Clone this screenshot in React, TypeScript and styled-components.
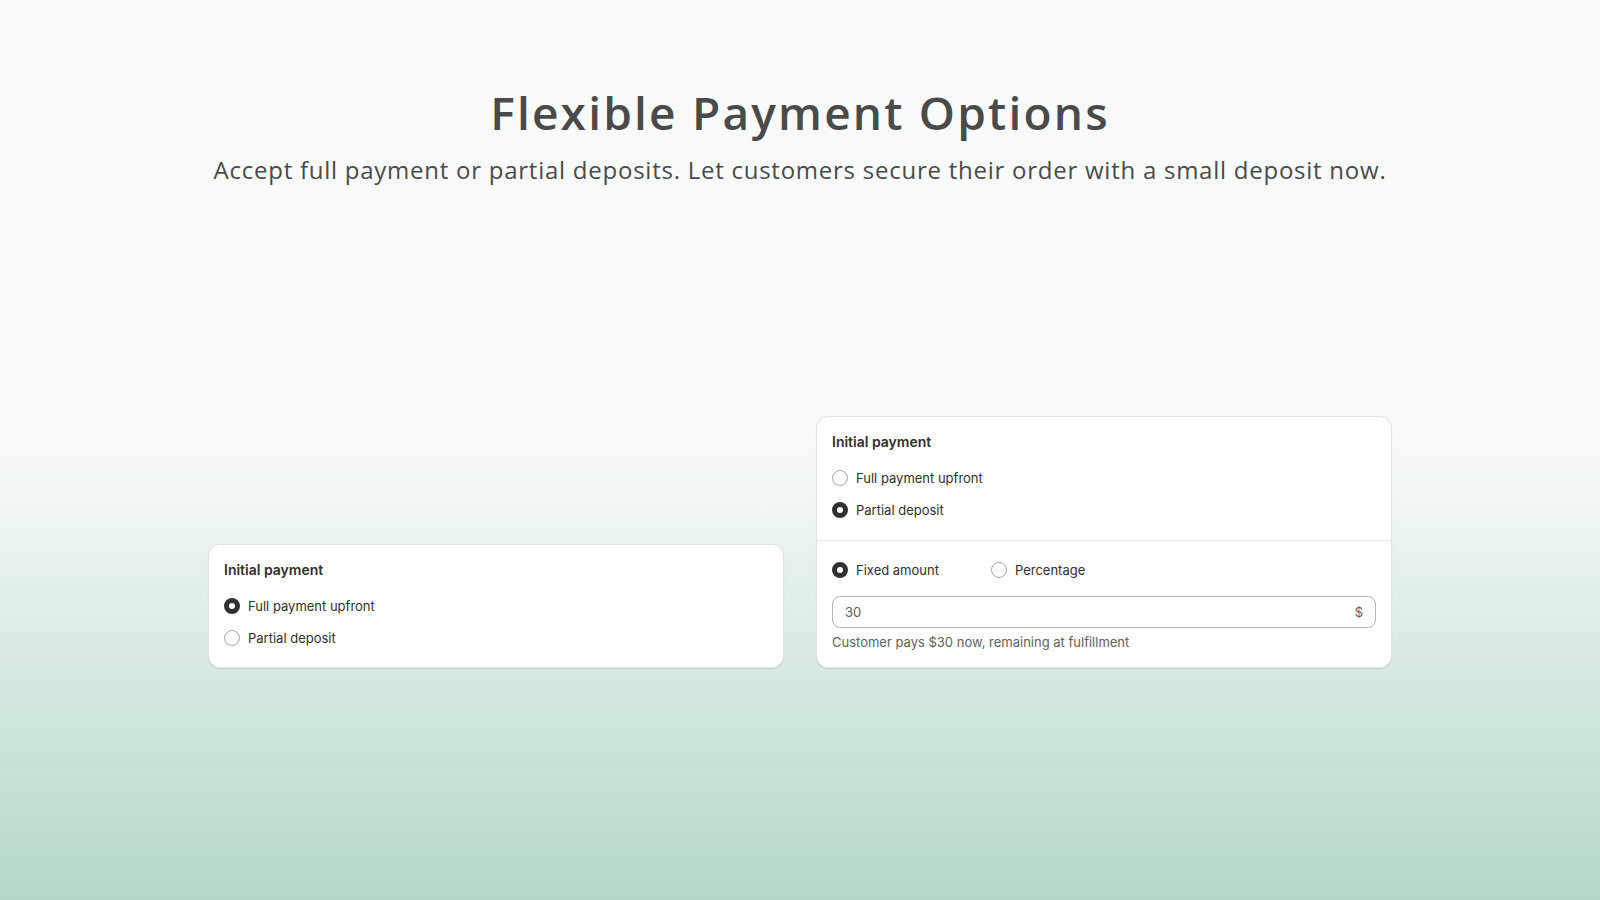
import React, { useState } from "react";
import styled, { createGlobalStyle, css } from "styled-components";

const GlobalStyle = createGlobalStyle`
  * {
    box-sizing: border-box;
  }
  body {
    margin: 0;
    font-family: Inter, "Liberation Sans", sans-serif;
    color: #303030;
  }
`;

const Page = styled.div`
  width: 100%;
  height: 900px;
  display: flex;
  flex-direction: column;
  align-items: center;
  background: linear-gradient(180deg, #f9fafa 0%, #f9fafa 49%, #eaf3ef 60%, #b3d9c6 100%);
`;

const Header = styled.header`
  display: flex;
  flex-direction: column;
  align-items: center;
  padding-top: 84px;
  gap: 14px;
`;

const Title = styled.h1`
  margin: 0;
  font-family: "Open Sans", "Noto Sans", sans-serif;
  font-size: 46px;
  font-weight: 600;
  line-height: 56px;
  letter-spacing: 2.2px;
  color: #4a4a4a;
`;

const Subtitle = styled.p`
  margin: 0;
  font-family: "Open Sans", "Noto Sans", sans-serif;
  font-size: 24px;
  font-weight: 400;
  line-height: 32px;
  letter-spacing: 0.75px;
  color: #4a4a4a;
`;

const Stage = styled.div`
  flex: 1;
  display: flex;
  align-items: flex-end;
  gap: 32px;
  padding-bottom: 232px;
`;

const Card = styled.div`
  width: 576px;
  background: #ffffff;
  border: 1px solid #e3e3e3;
  border-radius: 12px;
  box-shadow: 0 1px 1px rgba(26, 26, 26, 0.12);
  overflow: hidden;
`;

// $divided = lower section under a rule, $spaced = top section followed by one
const Section = styled.div<{ $divided?: boolean; $spaced?: boolean }>`
  display: flex;
  flex-direction: column;
  padding: 15px 15px ${(p) => (p.$spaced ? "18px" : "17px")} 15px;
  ${(p) =>
    p.$divided &&
    css`
      border-top: 1px solid #e8e8e8;
      padding-top: 17px;
    `}
`;

const Heading = styled.h3`
  margin: 0 0 14px;
  font-size: 14px;
  font-weight: 600;
  line-height: 20px;
  color: #303030;
`;

const Options = styled.div<{ $row?: boolean }>`
  display: flex;
  flex-direction: ${(p) => (p.$row ? "row" : "column")};
  gap: ${(p) => (p.$row ? "52px" : "8px")};
`;

const Option = styled.label`
  display: flex;
  align-items: center;
  gap: 8px;
  height: 24px;
  font-size: 13px;
  line-height: 20px;
  color: #303030;
  cursor: pointer;
`;

const Dot = styled.span<{ $on: boolean }>`
  width: 16px;
  height: 16px;
  border-radius: 50%;
  flex-shrink: 0;
  background: #ffffff;
  border: ${(p) => (p.$on ? "5px solid #303030" : "1px solid #a8a8a8")};
`;

const Field = styled.div`
  margin-top: 14px;
  height: 32px;
  display: flex;
  align-items: center;
  justify-content: space-between;
  padding: 0 12px;
  border: 1px solid #b5b5b5;
  border-radius: 8px;
  background: #fdfdfd;
  font-size: 13px;
  color: #616161;
`;

const Suffix = styled.span`
  color: #616161;
`;

const Help = styled.p`
  margin: 6px 0 0;
  font-size: 13px;
  line-height: 16px;
  color: #616161;
`;

type RadioProps = { label: string; on: boolean; onPick: () => void };

const Radio = ({ label, on, onPick }: RadioProps) => (
  <Option onClick={onPick}>
    <Dot $on={on} />
    {label}
  </Option>
);

const PaymentChoice = ({ value, onChange }: { value: string; onChange: (v: string) => void }) => (
  <Options>
    <Radio label="Full payment upfront" on={value === "full"} onPick={() => onChange("full")} />
    <Radio label="Partial deposit" on={value === "partial"} onPick={() => onChange("partial")} />
  </Options>
);

const App = () => {
  const [first, setFirst] = useState("full");
  const [second, setSecond] = useState("partial");
  const [kind, setKind] = useState("fixed");

  return (
    <>
      <GlobalStyle />
      <Page>
        <Header>
          <Title>Flexible Payment Options</Title>
          <Subtitle>Accept full payment or partial deposits. Let customers secure their order with a small deposit now.</Subtitle>
        </Header>
        <Stage>
          <Card>
            <Section>
              <Heading>Initial payment</Heading>
              <PaymentChoice value={first} onChange={setFirst} />
            </Section>
          </Card>
          <Card>
            <Section $spaced={second === "partial"}>
              <Heading>Initial payment</Heading>
              <PaymentChoice value={second} onChange={setSecond} />
            </Section>
            {second === "partial" && (
              <Section $divided>
                <Options $row>
                  <Radio label="Fixed amount" on={kind === "fixed"} onPick={() => setKind("fixed")} />
                  <Radio label="Percentage" on={kind === "percent"} onPick={() => setKind("percent")} />
                </Options>
                <Field>
                  <span>30</span>
                  <Suffix>{kind === "fixed" ? "$" : "%"}</Suffix>
                </Field>
                <Help>Customer pays $30 now, remaining at fulfillment</Help>
              </Section>
            )}
          </Card>
        </Stage>
      </Page>
    </>
  );
};

export default App;
